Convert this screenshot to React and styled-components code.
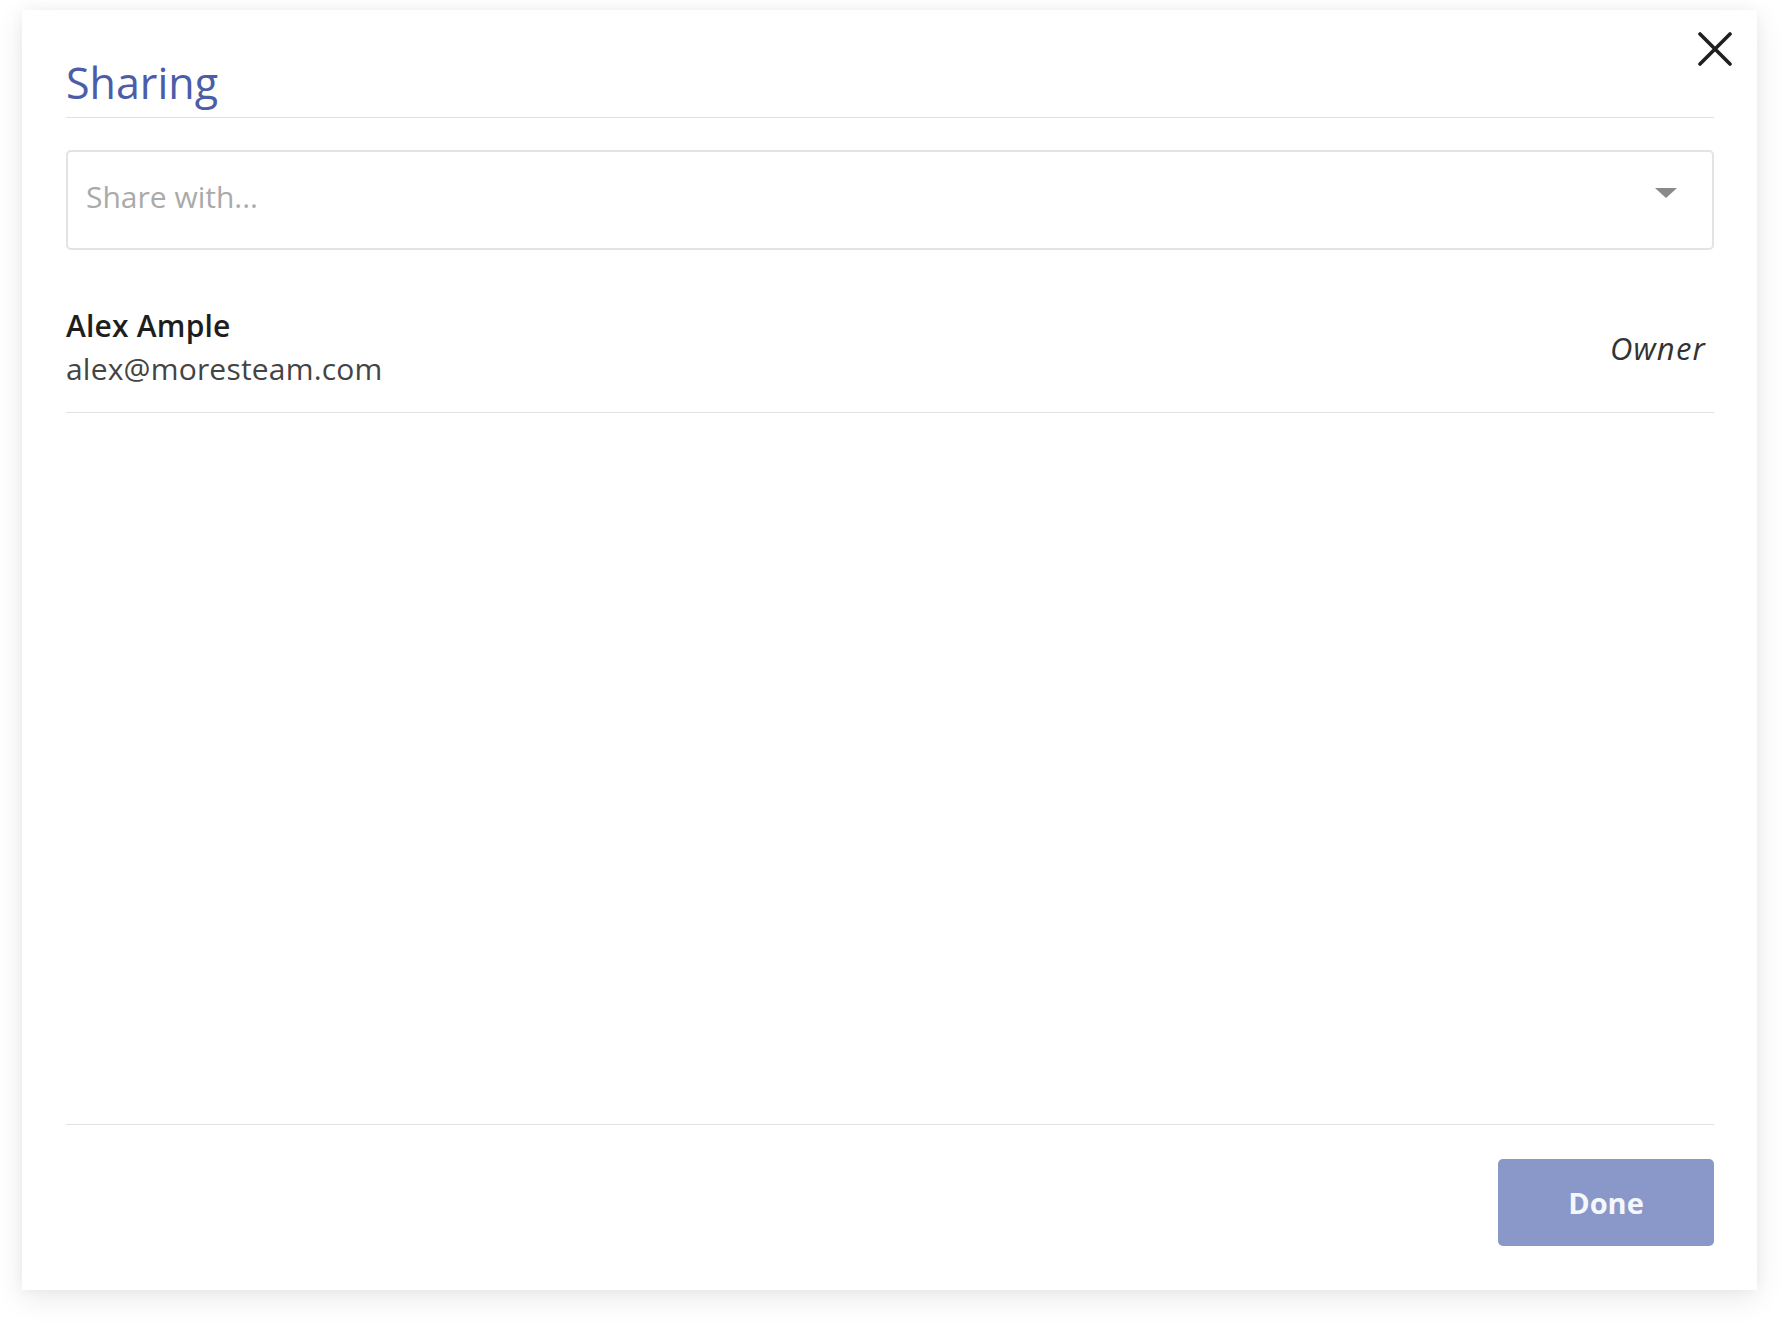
import React from "react";
import styled, { createGlobalStyle } from "styled-components";

const Global = createGlobalStyle`
    body{
        margin: 0;
        background-color: #ffffff;
        font-family: "Open Sans", "Noto Sans", sans-serif;
    }
`

const Page = styled.div`
    padding: 10px 35px 0 22px;
    height: 1332px;
    box-sizing: border-box;
`

const Dialog = styled.div`
    position: relative;
    height: 1280px;
    box-sizing: border-box;
    background-color: #fff;
    box-shadow: 0 8px 28px rgba(0, 0, 0, 0.09), 0 0 12px rgba(0, 0, 0, 0.04);
    padding: 43px 43px 44px 44px;
    display: flex;
    flex-direction: column;
`

const Close = styled.button`
    position: absolute;
    top: 22px;
    right: 25px;
    width: 34px;
    height: 34px;
    padding: 0;
    border: none;
    background: none;
    cursor: pointer;
`

const Title = styled.h2`
    margin: 0;
    font-size: 43px;
    line-height: 60px;
    font-weight: 400;
    color: #4b5ca8;
    padding-bottom: 4px;
    border-bottom: 1px solid #e2e2e2;
`

const Select = styled.div`
    margin-top: 32px;
    height: 100px;
    box-sizing: border-box;
    border: 2px solid #e3e3e3;
    border-radius: 5px;
    display: flex;
    align-items: center;
    justify-content: space-between;
    padding: 0 35px 8px 18px;
    font-size: 30px;
    color: #aaaaaa;
`

const Caret = styled.span`
    width: 0;
    height: 0;
    margin-bottom: 6px;
    border-left: 11px solid transparent;
    border-right: 11px solid transparent;
    border-top: 10px solid #8a8a8a;
`

const Row = styled.div`
    margin-top: 54px;
    padding: 0 8px 22px 0;
    border-bottom: 1px solid #e2e2e2;
    display: flex;
    align-items: center;
    justify-content: space-between;
`

const Person = styled.div`
    display: flex;
    flex-direction: column;
`

const Name = styled.div`
    font-size: 30px;
    line-height: 43px;
    letter-spacing: 0.2px;
    font-weight: ${p => p.bold ? 600 : 400};
    color: ${p => p.bold ? "#1e1e1e" : "#444"};
`

const Role = styled.div`
    font-size: 31px;
    font-style: italic;
    letter-spacing: 1.2px;
    color: #333;
    padding-top: 2px;
`

const Spacer = styled.div`
    flex: 1;
`

const Footer = styled.div`
    border-top: 1px solid #e2e2e2;
    padding-top: 34px;
    display: flex;
    justify-content: flex-end;
`

const Button = styled.button`
    width: 216px;
    height: 87px;
    border: none;
    border-radius: 5px;
    background-color: #8998c9;
    color: #f5f7fc;
    font-family: "Open Sans", sans-serif;
    font-size: 29px;
    font-weight: 700;
    cursor: pointer;
`

const App = () => {
    return(
        <Page>
            <Global />
            <Dialog>
                <Close aria-label="close">
                    <svg width="34" height="34" viewBox="0 0 34 34">
                        <path d="M2 2 L32 32 M32 2 L2 32" stroke="#1f1f1f" strokeWidth="3.6" strokeLinecap="round" />
                    </svg>
                </Close>
                <Title>Sharing</Title>
                <Select>
                    <span>Share with...</span>
                    <Caret />
                </Select>
                <Row>
                    <Person>
                        <Name bold>Alex Ample</Name>
                        <Name>alex@moresteam.com</Name>
                    </Person>
                    <Role>Owner</Role>
                </Row>
                <Spacer />
                <Footer>
                    <Button>Done</Button>
                </Footer>
            </Dialog>
        </Page>
    )
}

export default App;
